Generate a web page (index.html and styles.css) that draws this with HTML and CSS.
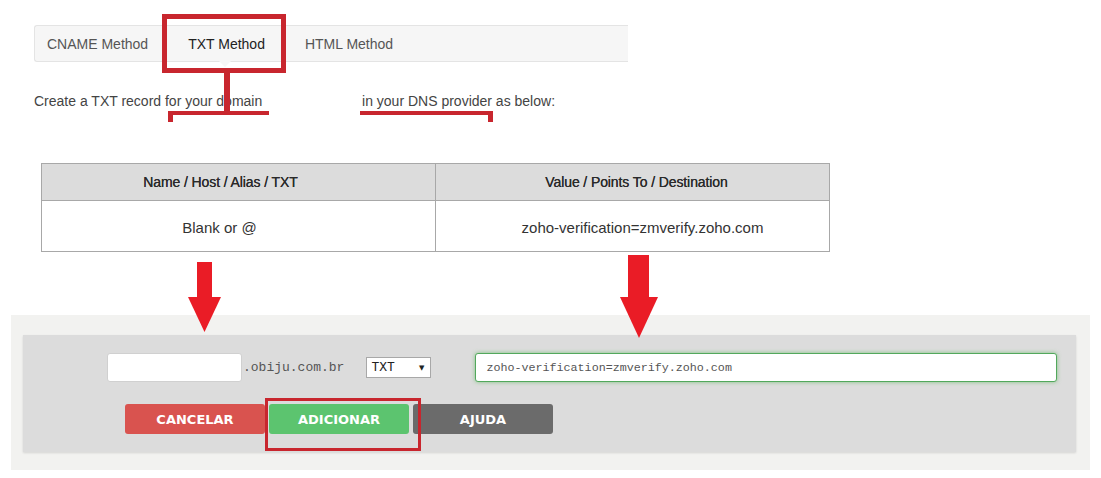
FILE: index.html
```html
<!DOCTYPE html>
<html lang="en">

<head>
    <meta charset="UTF-8">
    <meta name="viewport" content="width=device-width, initial-scale=1.0">
    <title>TXT Method</title>
    <link rel="stylesheet" href="styles.css">
</head>

<body>
    <div class="page">
        <ul class="tabs">
            <li class="first">CNAME Method</li>
            <li class="active">TXT Method</li>
            <li>HTML Method</li>
        </ul>

        <p class="intro">Create a TXT record for your domain <span class="blank"></span> in your DNS provider as below:</p>

        <table class="records">
            <tr>
                <th class="col-name">Name / Host / Alias / TXT</th>
                <th class="col-value">Value / Points To / Destination</th>
            </tr>
            <tr>
                <td class="col-name">Blank or @</td>
                <td class="col-value">zoho-verification=zmverify.zoho.com</td>
            </tr>
        </table>

        <div class="panel">
            <div class="panel-inner">
                <div class="fields">
                    <input class="host" type="text">
                    <span class="domain">.obiju.com.br</span>
                    <div class="type">TXT <span class="caret">&#9660;</span></div>
                    <input class="value" type="text" value="zoho-verification=zmverify.zoho.com">
                </div>
                <div class="actions">
                    <button class="btn cancel">CANCELAR</button>
                    <button class="btn add">ADICIONAR</button>
                    <button class="btn help">AJUDA</button>
                </div>
            </div>
        </div>

        <!-- marcações em vermelho por cima da tela -->
        <svg class="marks" width="1101" height="478" viewBox="0 0 1101 478">
            <g fill="#c8262e">
                <rect x="162" y="14" width="124" height="5" />
                <rect x="162" y="68" width="124" height="5" />
                <rect x="162" y="14" width="5" height="59" />
                <rect x="281" y="14" width="5" height="59" />
                <rect x="224" y="73" width="6" height="42" />
                <rect x="168" y="111" width="101" height="4" />
                <rect x="168" y="111" width="5" height="11" />
                <rect x="360" y="111" width="133" height="4" />
                <rect x="488" y="111" width="5" height="11" />
            </g>
            <rect x="266.5" y="399.5" width="153" height="50" fill="none" stroke="#c8262e" stroke-width="3" />
            <g fill="#ea1c26">
                <rect x="197" y="262" width="15" height="36" />
                <polygon points="188,297 221,297 204.5,332" />
                <rect x="628" y="255" width="21" height="43" />
                <polygon points="620,297 658,297 639,338" />
            </g>
        </svg>
    </div>
</body>

</html>
```

FILE: styles.css
```css
body {
    margin: 0;
    padding: 0;
    background-color: white;
    font-family: "Liberation Sans", Arial, sans-serif;
    color: #444;
}

.page {
    position: relative;
    width: 1101px;
    height: 478px;
    padding-top: 25px;
    box-sizing: border-box;
}

.tabs {
    list-style-type: none;
    margin: 0 0 0 34px;
    padding: 0;
    width: 594px;
    height: 37px;
    box-sizing: border-box;
    display: flex;
    background-color: #f6f6f6;
    border: 1px solid #e4e4e4;
    border-right: none;
    border-radius: 3px 0 0 3px;
}

.tabs li {
    position: relative;
    padding: 0 19px 0 20px;
    line-height: 36px;
    font-size: 14px;
    color: #555;
}

.tabs li.first {
    padding-left: 12px;
    padding-right: 13px;
}

.tabs li.active {
    color: #222;
    padding-left: 27px;
    padding-right: 20px;
}

.tabs li.active::after {
    content: "";
    position: absolute;
    left: 58px;
    bottom: -6px;
    border-left: 6px solid transparent;
    border-right: 6px solid transparent;
    border-top: 6px solid #f6f6f6;
}

.intro {
    margin: 29px 0 0 34px;
    font-size: 14px;
    line-height: 20px;
    color: #444;
}

.blank {
    display: inline-block;
    width: 92px;
}

.records {
    margin: 52px 0 0 41px;
    width: 789px;
    border-collapse: collapse;
    color: #333;
}

.records th,
.records td {
    padding: 0;
    border: 1px solid #a8a8a8;
    text-align: center;
    width: 50%;
}

.records th {
    height: 36px;
    background-color: #dcdcdc;
    font-size: 14px;
    font-weight: normal;
    color: #2a2a2a;
    text-shadow: 0 0 0.4px #2a2a2a;
    letter-spacing: -0.1px;
}

.records td {
    height: 51px;
    background-color: white;
    font-size: 15px;
    padding-top: 2px;
    box-sizing: border-box;
}

.records th.col-name {
    padding-right: 36px;
}

.records td.col-name {
    padding-right: 38px;
}

.records th.col-value {
    padding-left: 8px;
}

.records td.col-value {
    padding-left: 20px;
}

.panel {
    margin: 63px 0 0 11px;
    width: 1079px;
    height: 155px;
    padding: 20px 14px 18px 12px;
    box-sizing: border-box;
    background-color: #f2f2f0;
}

.panel-inner {
    height: 117px;
    padding: 18px 0 0 84px;
    box-sizing: border-box;
    background-color: #dcdcdc;
    box-shadow: 0 1px 2px rgba(0, 0, 0, 0.12);
}

.fields {
    display: flex;
    align-items: center;
    height: 29px;
}

.fields input {
    height: 29px;
    box-sizing: border-box;
    margin: 0;
    background-color: white;
    border-radius: 3px;
    outline: none;
}

.host {
    width: 135px;
    border: 1px solid #d0d0d0;
}

.domain {
    margin-left: 1px;
    font-family: "Liberation Mono", "Courier New", monospace;
    font-size: 13px;
    color: #555;
}

.type {
    margin-left: 22px;
    width: 65px;
    height: 21px;
    box-sizing: border-box;
    padding: 0 6px 0 4px;
    display: flex;
    justify-content: space-between;
    align-items: center;
    background-color: white;
    border: 1px solid #a8a8a8;
    font-family: "Liberation Mono", "Courier New", monospace;
    font-size: 13px;
    color: #222;
}

.caret {
    font-family: "DejaVu Sans", sans-serif;
    font-size: 7px;
}

.value {
    margin-left: 44px !important;
    width: 582px;
    padding: 0 10px;
    border: 1px solid #52a85c;
    box-shadow: 0 0 4px rgba(92, 184, 92, 0.7);
    font-family: "Liberation Mono", "Courier New", monospace;
    font-size: 11.7px;
    color: #555;
}

.actions {
    display: flex;
    gap: 4px;
    margin: 22px 0 0 18px;
}

.btn {
    width: 140px;
    height: 30px;
    border: none;
    border-radius: 3px;
    color: white;
    font-family: "DejaVu Sans", Verdana, sans-serif;
    font-size: 13px;
    font-weight: bold;
    cursor: pointer;
}

.cancel {
    background-color: #d9534f;
}

.add {
    background-color: #5cc46f;
}

.help {
    background-color: #6b6b6b;
}

.marks {
    position: absolute;
    left: 0;
    top: 0;
    pointer-events: none;
}
```
